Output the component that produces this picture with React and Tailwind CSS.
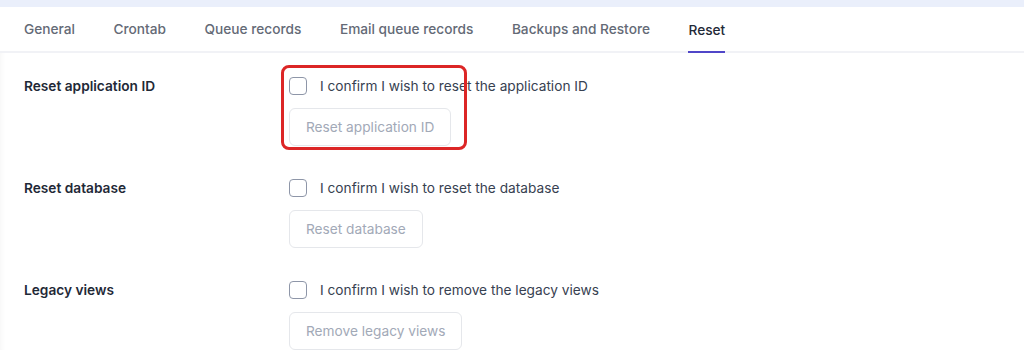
const tabs = ["General", "Crontab", "Queue records", "Email queue records", "Backups and Restore", "Reset"];

const rows = [
  { label: "Reset application ID", confirm: "I confirm I wish to reset the application ID", button: "Reset application ID", highlight: true },
  { label: "Reset database", confirm: "I confirm I wish to reset the database", button: "Reset database" },
  { label: "Legacy views", confirm: "I confirm I wish to remove the legacy views", button: "Remove legacy views" },
];

function ResetRow({ row }) {
  const body = (
    <div className="flex flex-col items-start">
      <label className="flex h-5 items-center gap-[13px] text-[13.7px] text-[#374151]">
        <input type="checkbox" className="peer sr-only" />
        <span className="block h-[18px] w-[18px] rounded-[4px] border-[1.5px] border-[#8e96a8] bg-white" />
        <span>{row.confirm}</span>
      </label>
      <button
        disabled
        className="mt-3 h-[38px] rounded-md border border-[#e5e7eb] bg-white px-4 text-[13.7px] text-[#a2a9b7]"
      >
        {row.button}
      </button>
    </div>
  );

  return (
    <div className="flex">
      <div className="w-[265px] shrink-0 text-[13.7px] font-semibold leading-5 text-[#1f2937]">{row.label}</div>
      {row.highlight ? (
        <div className="relative">
          {body}
          <div className="pointer-events-none absolute -left-[8px] -top-[11px] h-[85px] w-[186px] rounded-lg border-[3px] border-[#dc2626]" />
        </div>
      ) : (
        body
      )}
    </div>
  );
}

export default function App() {
  return (
    <div className="min-h-[356px] w-full bg-white" style={{ fontFamily: "Inter, 'Noto Sans', sans-serif" }}>
      <div className="h-[7px] bg-[#eaeffb]" />
      <nav className="flex h-[46px] gap-[38.5px] border-b-2 border-[#f1f2f6] px-6">
        {tabs.map((t) => (
          <div
            key={t}
            className={
              t === "Reset"
                ? "-mb-[2px] flex items-center border-b-2 border-[#5046c8] pt-[2px] text-[13.7px] font-medium text-[#1f2937]"
                : "flex items-center text-[13.7px] font-medium text-[#646a76]"
            }
          >
            {t}
          </div>
        ))}
      </nav>
      <div className="flex flex-col gap-8 px-6 pt-[23px] shadow-[inset_6px_0_6px_-6px_rgba(0,0,0,0.06)]">
        {rows.map((r) => (
          <ResetRow key={r.label} row={r} />
        ))}
      </div>
    </div>
  );
}
